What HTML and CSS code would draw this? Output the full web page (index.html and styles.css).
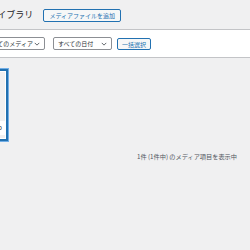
FILE: index.html
```html
<!DOCTYPE html>
<html lang="ja">
<head>
    <meta charset="UTF-8">
    <title>メディアライブラリ</title>
    <link rel="stylesheet" href="styles.css">
</head>
<body>
    <div class="wrap">
        <div class="head">
            <h1>メディアライブラリ</h1>
            <a class="button" href="#">メディアファイルを追加</a>
        </div>

        <div class="toolbar">
            <div class="select media-type">すべてのメディア
                <svg viewBox="0 0 8 5" width="6" height="4"><path d="M1 1l3 3 3-3" fill="none" stroke="#50575e" stroke-width="1.2"/></svg>
            </div>
            <div class="select media-date">すべての日付
                <svg viewBox="0 0 8 5" width="6" height="4"><path d="M1 1l3 3 3-3" fill="none" stroke="#50575e" stroke-width="1.2"/></svg>
            </div>
            <a class="button bulk" href="#">一括選択</a>
        </div>

        <div class="grid">
            <div class="attachment">
                <div class="thumb">
                    <div class="filename">video</div>
                </div>
            </div>
        </div>

        <p class="count">1件 (1件中) のメディア項目を表示中</p>
    </div>
</body>
</html>
```

FILE: styles.css
```css
html, body {
    margin: 0;
    overflow: hidden;
}
body {
    background: #f0f0f1;
    font-family: "Noto Sans CJK JP", "Noto Sans", sans-serif;
    color: #1d2327;
}
.wrap {
    width: 468px;
    margin-left: -47px;
}
.head {
    display: flex;
    align-items: center;
    gap: 10px;
    height: 29px;
}
.head h1 {
    margin: 0;
    font-size: 9px;
    font-weight: 400;
    line-height: 1;
}
.button {
    display: inline-block;
    box-sizing: border-box;
    font-size: 6px;
    line-height: 11px;
    padding: 0 4px;
    color: #2271b1;
    background: #f6f7f7;
    border: 1px solid #2271b1;
    border-radius: 2px;
    text-decoration: none;
}
.head .button {
    padding: 0 5px;
    margin-top: 1px;
}
.toolbar {
    display: flex;
    align-items: center;
    height: 27px;
    padding-left: 28px;
    background: #fff;
    border: 1px solid #c3c4c7;
    border-left: none;
    border-right: none;
}
.select {
    display: flex;
    align-items: center;
    justify-content: space-between;
    box-sizing: border-box;
    height: 13px;
    padding: 0 4px;
    font-size: 6px;
    color: #2c3338;
    background: #fff;
    border: 1px solid #8c8f94;
    border-radius: 2px;
}
.media-type {
    width: 64px;
    margin-right: 8px;
}
.media-date {
    width: 59px;
    margin-right: 5px;
}
.bulk {
    width: 34px;
    height: 12px;
    text-align: center;
    padding: 0;
}
.grid {
    display: flex;
    padding: 11px 0 0 0;
}
.attachment {
    width: 68px;
    height: 68px;
    margin-left: -17px;
    padding: 2px;
    background: #f6f7f7;
    box-shadow: inset 0 0 0 2px #2271b1, 0 0 0 1px #72aee6;
}
.thumb {
    position: relative;
    height: 100%;
    background: #f0f0f1;
    box-shadow: inset 0 0 0 1px #fff;
}
.filename {
    position: absolute;
    left: 0;
    right: 0;
    bottom: 4px;
    height: 14px;
    padding-right: 4px;
    background: #fff;
    font-size: 6px;
    line-height: 14px;
    text-align: right;
    color: #1d2327;
}
.count {
    margin: 11px 0 0;
    text-align: center;
    font-size: 6.2px;
    color: #50575e;
}
```
